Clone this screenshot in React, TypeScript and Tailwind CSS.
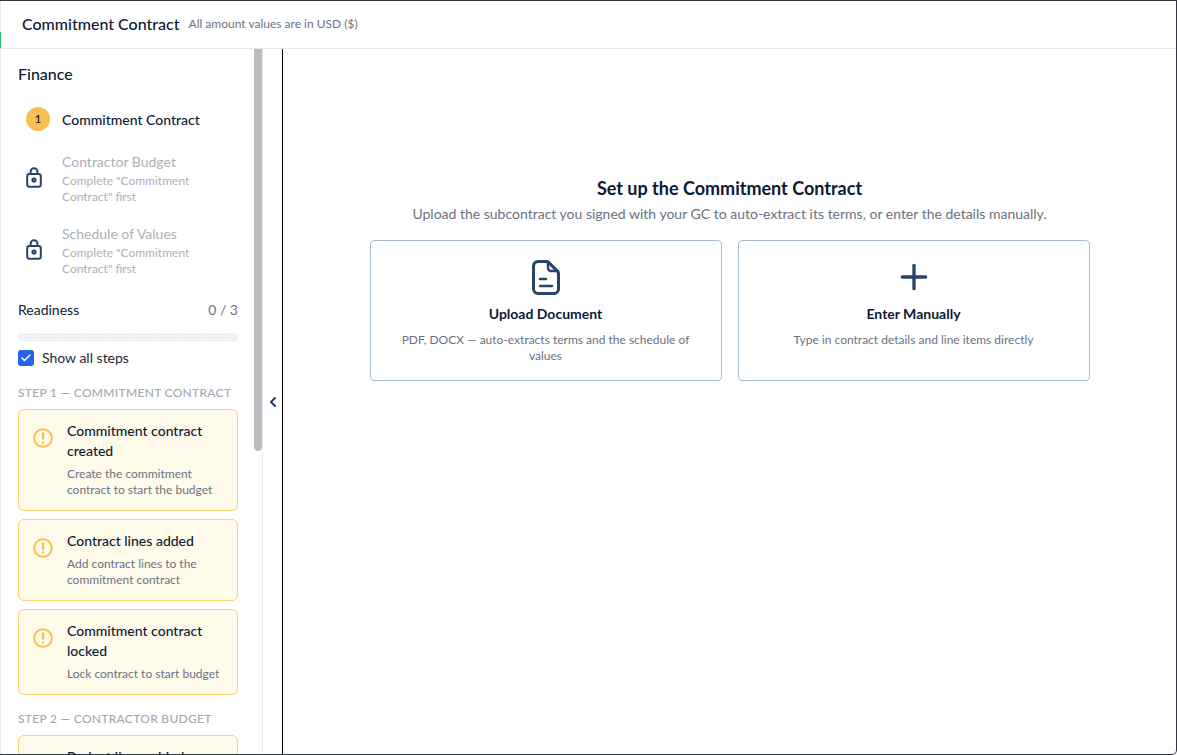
import { Check, ChevronLeft, Plus } from 'lucide-react';

function LockIcon() {
  return (
    <svg width="16" height="21" viewBox="0 0 16 21" fill="none" stroke="#2a4368" strokeWidth="2" strokeLinecap="round" strokeLinejoin="round">
      <rect x="1.2" y="7" width="13.6" height="12.8" rx="2.2" />
      <path d="M4.6 7V4.6a3.4 3.4 0 0 1 6.8 0V7" />
      <circle cx="8" cy="13" r="1.6" />
    </svg>
  );
}

function AlertIcon() {
  return (
    <svg width="20" height="20" viewBox="0 0 20 20" fill="none" stroke="#f7c04f" strokeLinecap="round" className="shrink-0 mt-[7px] mr-[14px]">
      <circle cx="10" cy="10" r="8.8" strokeWidth="2" />
      <path d="M10 5.4v5.4" strokeWidth="2.4" />
      <path d="M10 14.4v.1" strokeWidth="2.4" />
    </svg>
  );
}

function DocIcon() {
  return (
    <svg width="28" height="35" viewBox="0 0 28 35" fill="none" stroke="#2a4368" strokeWidth="3" strokeLinecap="round" strokeLinejoin="round">
      <path d="M6 1.5h8.5a3 3 0 0 1 2.1.9l9 9a3 3 0 0 1 .9 2.1V29a4.5 4.5 0 0 1-4.5 4.5H6A4.5 4.5 0 0 1 1.5 29V6A4.5 4.5 0 0 1 6 1.5z" />
      <path d="M16 2v6a3 3 0 0 0 3 3h7" strokeWidth="2.4" />
      <path d="M8 19h6" strokeWidth="2.4" />
      <path d="M8 26h12" strokeWidth="2.4" />
    </svg>
  );
}

function LockedStep({ title }: { title: string }) {
  return (
    <div className="flex items-center">
      <div className="w-[44px] pl-[8px] shrink-0 -mt-[3px]">
        <LockIcon />
      </div>
      <div>
        <div className="text-[14px] leading-[20px] text-[#adb0b8]">{title}</div>
        <div className="mt-[1px] text-[12px] leading-[16px] text-[#adb0b8] w-[150px]">Complete "Commitment Contract" first</div>
      </div>
    </div>
  );
}

function Warn({ title, text }: { title: string; text: string }) {
  return (
    <div className="flex rounded-[6px] border border-[#fbd469] bg-[#fffbeb] pl-[14px] pr-[12px] pt-[11px] pb-[12px]">
      <AlertIcon />
      <div>
        <div className="text-[14px] leading-[20px] font-medium text-[#0c1a33]">{title}</div>
        <div className="mt-[5px] text-[12px] leading-[16px] text-[#6b7280]">{text}</div>
      </div>
    </div>
  );
}

function Choice({ icon, title, text }: { icon: React.ReactNode; title: string; text: string }) {
  return (
    <div className="w-[352px] h-[141px] rounded-[4px] border border-[#a9bbd0] flex flex-col items-center pt-[18px] px-[24px] text-center">
      <div className="h-[36px] flex items-center justify-center">{icon}</div>
      <div className="mt-[9px] text-[14px] leading-[20px] font-bold text-[#0c1a33]">{title}</div>
      <div className="mt-[8px] text-[12px] leading-[16px] text-[#6b7280]">{text}</div>
    </div>
  );
}

function App() {
  return (
    <div className="h-[755px] w-[1177px] overflow-hidden bg-white font-['Lato',sans-serif] border-t border-r border-b border-[#33373d] rounded-br-[5px] flex flex-col relative">
      <div className="absolute left-0 top-[31px] h-[16px] w-[1px] bg-[#22c55e]" />
      <div className="h-[48px] shrink-0 border-b border-[#e5e7eb] border-l flex items-center pl-[21px] pb-[1px] gap-[9px]">
        <span className="text-[16px] font-medium text-[#0c1a33]">Commitment Contract</span>
        <span className="text-[12px] text-[#6b7280]">All amount values are in USD ($)</span>
      </div>
      <div className="flex flex-1 min-h-0">
        <div className="w-[262px] shrink-0 border-l border-[#e5e7eb] relative overflow-hidden pl-[17px] pr-[24px] pt-[14px]">
          <div className="absolute right-0 top-0 h-[402px] w-[8px] rounded-b-full rounded-t-[4px] bg-[#bcbcc2]" />
          <div className="text-[16px] leading-[22px] font-medium text-[#0c1a33]">Finance</div>
          <div className="mt-[22px] flex items-center h-[24px]">
            <div className="ml-[8px] w-[24px] h-[24px] rounded-full bg-[#f6bf4f] flex items-center justify-center text-[12px] font-medium text-[#0c1a33]">1</div>
            <span className="ml-[12px] text-[14px] font-medium text-[#0c1a33]">Commitment Contract</span>
          </div>
          <div className="mt-[21px] flex flex-col gap-[19px]">
            <LockedStep title="Contractor Budget" />
            <LockedStep title="Schedule of Values" />
          </div>
          <div className="mt-[23px] flex justify-between text-[14px] leading-[20px]">
            <span className="text-[#0c1a33]">Readiness</span>
            <span className="text-[#6b7280]">0 / 3</span>
          </div>
          <div className="mt-[13px] h-[8px] rounded-full bg-[radial-gradient(#dcdee3_1px,#f3f4f6_1px)] bg-[length:3px_3px]" />
          <div className="mt-[7px] flex items-center gap-[8px]">
            <div className="w-[16px] h-[16px] rounded-[3px] bg-[#2563eb] flex items-center justify-center">
              <Check size={12} strokeWidth={3} className="text-white" />
            </div>
            <span className="text-[14px] leading-[20px] text-[#1f2937]">Show all steps</span>
          </div>
          <div className="mt-[17px] text-[12px] leading-[16px] font-medium tracking-[0.3px] text-[#a3a8b3]">STEP 1 — COMMITMENT CONTRACT</div>
          <div className="mt-[8px] flex flex-col gap-[8px]">
            <Warn title="Commitment contract created" text="Create the commitment contract to start the budget" />
            <Warn title="Contract lines added" text="Add contract lines to the commitment contract" />
            <Warn title="Commitment contract locked" text="Lock contract to start budget" />
          </div>
          <div className="mt-[16px] text-[12px] leading-[16px] font-medium tracking-[0.3px] text-[#a3a8b3]">STEP 2 — CONTRACTOR BUDGET</div>
          <div className="mt-[8px]">
            <Warn title="Budget lines added" text="Add budget lines to the contractor budget" />
          </div>
        </div>
        <div className="w-[20px] shrink-0 border-l border-dotted border-[#cfdbea] flex items-center justify-center">
          <ChevronLeft size={16} strokeWidth={3} className="text-[#1e3a6e]" />
        </div>
        <div className="flex-1 border-l border-black flex flex-col items-center pt-[128px]">
          <div className="text-[18px] leading-[22px] font-bold text-[#0c1a33]">Set up the Commitment Contract</div>
          <div className="mt-[5px] text-[14px] leading-[20px] text-[#6b7280]">Upload the subcontract you signed with your GC to auto-extract its terms, or enter the details manually.</div>
          <div className="mt-[16px] flex gap-[16px]">
            <Choice icon={<DocIcon />} title="Upload Document" text="PDF, DOCX — auto-extracts terms and the schedule of values" />
            <Choice icon={<Plus size={40} strokeWidth={2} className="text-[#2a4368]" />} title="Enter Manually" text="Type in contract details and line items directly" />
          </div>
        </div>
      </div>
    </div>
  );
}

export default App;
